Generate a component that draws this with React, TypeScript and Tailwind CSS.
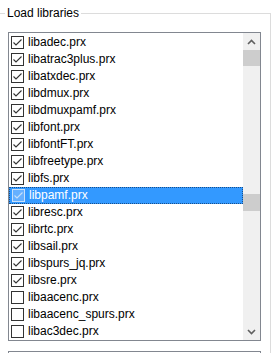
import React from "react";

const items: { name: string; checked: boolean }[] = [
  { name: "libadec.prx", checked: true },
  { name: "libatrac3plus.prx", checked: true },
  { name: "libatxdec.prx", checked: true },
  { name: "libdmux.prx", checked: true },
  { name: "libdmuxpamf.prx", checked: true },
  { name: "libfont.prx", checked: true },
  { name: "libfontFT.prx", checked: true },
  { name: "libfreetype.prx", checked: true },
  { name: "libfs.prx", checked: true },
  { name: "libpamf.prx", checked: true },
  { name: "libresc.prx", checked: true },
  { name: "librtc.prx", checked: true },
  { name: "libsail.prx", checked: true },
  { name: "libspurs_jq.prx", checked: true },
  { name: "libsre.prx", checked: true },
  { name: "libaacenc.prx", checked: false },
  { name: "libaacenc_spurs.prx", checked: false },
  { name: "libac3dec.prx", checked: false },
];

function Check({ checked, selected }: { checked: boolean; selected: boolean }) {
  return (
    <div
      className={
        "w-[13px] h-[13px] shrink-0 border " +
        (selected ? "border-[#c8e0fa] bg-[#66b0ff]" : "border-[#333333] bg-white")
      }
    >
      {checked && (
        <svg width="11" height="11" viewBox="0 0 11 11" className="block">
          <polyline
            points="1.5,5.5 4,8 9.5,2.5"
            fill="none"
            stroke={selected ? "#c8e0fa" : "#333333"}
            strokeWidth="1.1"
          />
        </svg>
      )}
    </div>
  );
}

export default function App() {
  return (
    <div
      className="w-[275px] h-[353px] bg-white overflow-hidden text-[12px] text-black"
      style={{ fontFamily: '"Liberation Sans", Arial, sans-serif' }}
    >
      <div className="relative mt-[13px] w-[271px] h-[400px] border-t border-r border-[#dcdcdc]">
        <div className="absolute left-[5px] top-[-9px] bg-white px-[2px] leading-[16px]">
          Load libraries
        </div>
        <div className="pt-[18px] pl-[8px] flex flex-col gap-[10px]">
          <div className="w-[253px] h-[309px] border border-[#828790] flex">
            <div className="w-[234px] pt-[1px] flex flex-col">
              {items.map((it, i) => {
                const sel = i === 9;
                return (
                  <div
                    key={it.name}
                    className={
                      "h-[17px] flex items-center pl-[2px] " +
                      (sel ? "bg-[#3399ff] text-white border border-dotted border-[#1a4f8a] pl-[1px]" : "")
                    }
                  >
                    <Check checked={it.checked} selected={sel} />
                    <span className="ml-[4px] leading-[17px] whitespace-nowrap">{it.name}</span>
                  </div>
                );
              })}
            </div>
            <div className="w-[17px] ml-auto bg-[#f0f0f0] flex flex-col">
              <div className="h-[17px] flex items-center justify-center">
                <svg width="9" height="6" viewBox="0 0 9 6">
                  <polyline points="1,5 4.5,1.5 8,5" fill="none" stroke="#606060" strokeWidth="1.6" />
                </svg>
              </div>
              <div className="h-[16px] bg-[#cdcdcd]" />
              <div className="h-[128px]" />
              <div className="h-[17px] bg-[#cdcdcd]" />
              <div className="flex-1" />
              <div className="h-[17px] flex items-center justify-center">
                <svg width="9" height="6" viewBox="0 0 9 6">
                  <polyline points="1,1 4.5,4.5 8,1" fill="none" stroke="#606060" strokeWidth="1.6" />
                </svg>
              </div>
            </div>
          </div>
          <div className="w-[253px] h-[30px] border border-[#828790]" />
        </div>
      </div>
    </div>
  );
}
